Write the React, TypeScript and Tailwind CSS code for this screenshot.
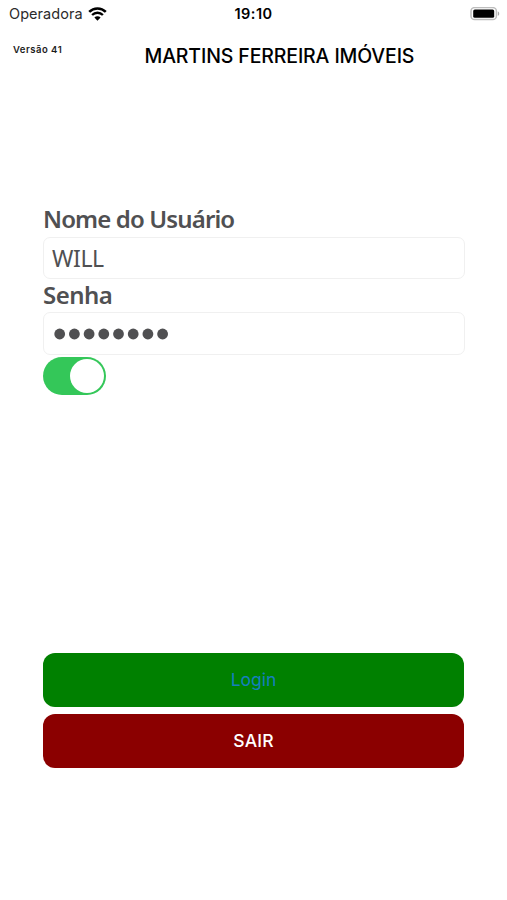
import { useState } from "react";

const PASSWORD_LENGTH = 8;

function StatusBar() {
  return (
    <div className="grid h-7 grid-cols-3 items-center pl-[9px] pr-[7px] text-black">
      <div className="flex items-center gap-[5px]">
        <span className="text-[14.5px] leading-7 tracking-[0.05px] text-[#2b2b2b]">
          Operadora
        </span>
        <svg width="19" height="14" viewBox="0 0 19 14" fill="none">
          <path d="M1.2 4.9a11.8 11.8 0 0 1 16.6 0" stroke="currentColor" strokeWidth="2.6" />
          <path d="M4.1 8a7.7 7.7 0 0 1 10.8 0" stroke="currentColor" strokeWidth="2.4" />
          <path d="M9.5 13.7 6.4 10.6a4.4 4.4 0 0 1 6.2 0Z" fill="currentColor" />
        </svg>
      </div>
      <span className="pr-[2px] text-center text-[14.5px] font-semibold leading-7 tracking-[0.45px]">
        19:10
      </span>
      <svg className="justify-self-end" width="30" height="14" viewBox="0 0 30 14" fill="none">
        <rect x="1" y="0.6" width="25.4" height="12" rx="3.6" stroke="#bdbdbd" strokeWidth="1.5" />
        <rect x="3.2" y="2.5" width="21" height="8.3" rx="1.6" fill="#000" />
        <path d="M27.8 4.4c1.9.6 1.9 3.8 0 4.4Z" fill="#a8a8a8" />
      </svg>
    </div>
  );
}

function Header() {
  return (
    <header className="flex h-14 items-start pl-[13px] text-black">
      <span className="w-[131.5px] pt-[14px] text-[9.5px] font-semibold leading-4 tracking-[0.5px] text-[#1c1c1c]">
        Versão 41
      </span>
      <h1 className="whitespace-nowrap pt-[14px] text-[19.5px] font-medium leading-7 tracking-[-0.13px]">
        MARTINS FERREIRA IMÓVEIS
      </h1>
    </header>
  );
}

function PasswordDots() {
  return (
    <svg width="120" height="12" viewBox="0 0 120 12" fill="currentColor">
      {Array.from({ length: PASSWORD_LENGTH }, (_, i) => (
        <circle key={i} cx={5.7 + i * 14.7} cy="6" r="5.4" />
      ))}
    </svg>
  );
}

export default function App() {
  const [remember, setRemember] = useState(true);

  return (
    <main className="flex h-[900px] w-[507px] flex-col overflow-hidden bg-white font-[Inter,sans-serif]">
      <StatusBar />
      <Header />

      <section className="mt-[119px] ml-[43px] flex h-[450px] w-[422px] flex-col font-['Noto_Sans',sans-serif] text-[#505052]">
        <label className="h-[34px] text-[24px] font-semibold leading-[32px] tracking-[-0.87px]">
          Nome do Usuário
        </label>
        <div className="flex h-[42px] items-center rounded-[7px] border-[1.5px] border-[#f0f0f0] pl-2 text-[23px] leading-none tracking-[-0.4px]">
          WILL
        </div>
        <label className="h-[33px] text-[24px] font-semibold leading-[32px] tracking-[-0.5px]">
          Senha
        </label>
        <div className="flex h-[43px] items-center rounded-[7px] border-[1.5px] border-[#f0f0f0] pl-[10px]">
          <PasswordDots />
        </div>
        <button
          type="button"
          role="switch"
          aria-checked={remember}
          onClick={() => setRemember(!remember)}
          className={`mt-[2px] flex h-[38px] w-[63px] items-center rounded-full p-[2px] ${
            remember ? "justify-end bg-[#34c759]" : "justify-start bg-[#e9e9ea]"
          }`}
        >
          <span className="size-[34px] rounded-full bg-white" />
        </button>
      </section>

      <div className="ml-[43px] flex w-[421px] flex-col gap-[7px]">
        <button
          type="button"
          className="h-[54px] rounded-[12px] bg-[#008000] text-[17.5px] text-[#167fbd]"
        >
          Login
        </button>
        <button
          type="button"
          className="h-[54px] rounded-[12px] bg-[#8b0000] text-[17.5px] font-medium tracking-[0.2px] text-white"
        >
          SAIR
        </button>
      </div>
    </main>
  );
}
